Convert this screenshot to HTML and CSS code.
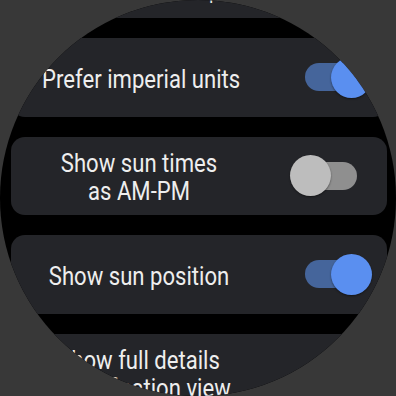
FILE: index.html
```html
<!DOCTYPE html>
<html lang="en">
<head>
    <meta charset="UTF-8">
    <meta name="viewport" content="width=device-width, initial-scale=1.0">
    <title>Settings</title>
    <link rel="stylesheet" href="styles.css">
</head>
<body>
    <div class="watch">
        <div class="list">
            <div class="chip chip-top">
                <span class="label small">Show location updates</span>
            </div>
            <div class="chip">
                <span class="label">Prefer imperial units</span>
                <span class="switch on"></span>
            </div>
            <div class="chip">
                <span class="label">Show sun times<br>as AM-PM</span>
                <span class="switch"></span>
            </div>
            <div class="chip">
                <span class="label">Show sun position</span>
                <span class="switch on"></span>
            </div>
            <div class="chip">
                <span class="label">Show full details<br>in notification view</span>
            </div>
        </div>
    </div>
</body>
</html>
```

FILE: styles.css
```css
html, body {
    margin: 0;
    padding: 0;
    background: #383838;
}
body {
    font-family: Roboto, "Noto Sans", sans-serif;
    color: #eeeeee;
}
.watch {
    width: 396px;
    height: 396px;
    border-radius: 50%;
    overflow: hidden;
    background: #000;
}
.list {
    display: flex;
    flex-direction: column;
    gap: 20px;
    margin-top: -60.5px;
    padding: 0 9px 0 11px;
}
.chip {
    display: flex;
    align-items: center;
    height: 78.5px;
    flex: none;
    padding: 0 15px 0 14px;
    background: #242529;
    border-radius: 14px;
}
.chip-top {
    align-items: flex-end;
}
.label {
    width: 228px;
    margin-right: 37px;
    padding-top: 3px;
    font-size: 26px;
    line-height: 28px;
    text-align: center;
    white-space: nowrap;
    transform: scaleX(0.85);
}
.label.small {
    width: 300px;
    padding-bottom: 12px;
    font-size: 20px;
}
.switch {
    position: relative;
    width: 82px;
    height: 41px;
    flex: none;
}
.switch::before {
    content: "";
    position: absolute;
    left: 15px;
    right: 15px;
    top: 6.5px;
    height: 28px;
    border-radius: 14px;
    background: #8f8f8f;
}
.switch::after {
    content: "";
    position: absolute;
    left: 0;
    top: 0;
    width: 41px;
    height: 41px;
    border-radius: 50%;
    background: #bdbdbd;
    box-shadow: 0 1px 2px rgba(0, 0, 0, 0.45);
}
.switch.on::before {
    background: #45659b;
}
.switch.on::after {
    left: auto;
    right: 0;
    background: #5a8ff0;
}
```
